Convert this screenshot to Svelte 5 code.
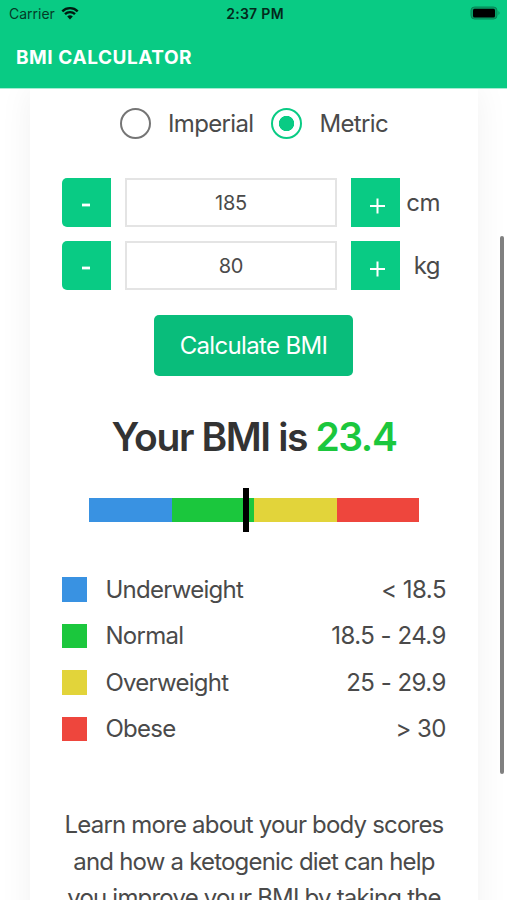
<script lang="ts">
	let units = $state('metric');
	let height = $state(185);
	let weight = $state(80);
	let bmi = $state(23.4);

	const ranges = [
		{ name: 'Underweight', key: 'under', range: '< 18.5' },
		{ name: 'Normal', key: 'normal', range: '18.5 - 24.9' },
		{ name: 'Overweight', key: 'over', range: '25 - 29.9' },
		{ name: 'Obese', key: 'obese', range: '> 30' }
	];

	let level = $derived(bmi < 18.5 ? 'under' : bmi < 25 ? 'normal' : bmi < 30 ? 'over' : 'obese');

	function calculate() {
		const ratio =
			units === 'metric' ? weight / (height / 100) ** 2 : (703 * weight) / height ** 2;
		bmi = Math.round(ratio * 10) / 10;
	}
</script>

<div class="screen">
	<header>
		<div class="status">
			<div class="carrier">
				<span>Carrier</span>
				<svg width="18" height="14" viewBox="0 0 18 14">
					<path d="M1.3 5.3a11 11 0 0 1 15.4 0" />
					<path d="M4 8.2a7.1 7.1 0 0 1 10 0" />
					<path class="dot" d="M9 13.4 6.2 10.6a4 4 0 0 1 5.6 0z" />
				</svg>
			</div>
			<span class="time">2:37 PM</span>
			<svg class="battery" width="31" height="14" viewBox="0 0 31 14">
				<rect class="shell" x="1" y="1" width="26" height="12" rx="3.5" />
				<rect x="3" y="2.8" width="22" height="8.6" rx="1.5" />
				<path class="tip" d="M28.5 5v4q2-2 0-4z" />
			</svg>
		</div>
		<h1>BMI CALCULATOR</h1>
	</header>

	<main>
		<section class="card">
			<div class="units">
				<label>
					<input type="radio" bind:group={units} value="imperial" />
					<span>Imperial</span>
				</label>
				<label>
					<input type="radio" bind:group={units} value="metric" />
					<span>Metric</span>
				</label>
			</div>

			<div class="fields">
				<div class="field">
					<button class="step minus" aria-label="Decrease height" onclick={() => height--}>
						<svg width="24" height="24" viewBox="0 0 24 24"><path d="M8 13h8" /></svg>
					</button>
					<input type="text" aria-label="Height" bind:value={height} />
					<button class="step plus" aria-label="Increase height" onclick={() => height++}>
						<svg width="24" height="24" viewBox="0 0 24 24"><path d="M5 14h15M12.5 6.5v15" /></svg>
					</button>
					<span class="unit">{units === 'metric' ? 'cm' : 'in'}</span>
				</div>
				<div class="field">
					<button class="step minus" aria-label="Decrease weight" onclick={() => weight--}>
						<svg width="24" height="24" viewBox="0 0 24 24"><path d="M8 13h8" /></svg>
					</button>
					<input type="text" aria-label="Weight" bind:value={weight} />
					<button class="step plus" aria-label="Increase weight" onclick={() => weight++}>
						<svg width="24" height="24" viewBox="0 0 24 24"><path d="M5 14h15M12.5 6.5v15" /></svg>
					</button>
					<span class="unit">{units === 'metric' ? 'kg' : 'lb'}</span>
				</div>
			</div>

			<button class="calculate" onclick={calculate}>Calculate BMI</button>

			<h2>Your BMI is <span class="score {level}">{bmi}</span></h2>

			<div class="scale">
				{#each ranges as r}
					<div class="segment {r.key}"></div>
				{/each}
				<div class="marker" style="left: {(bmi / 50) * 100}%"></div>
			</div>

			<ul>
				{#each ranges as r}
					<li>
						<span class="swatch {r.key}"></span>
						<span class="name">{r.name}</span>
						<span class="range">{r.range}</span>
					</li>
				{/each}
			</ul>

			<p>
				Learn more about your body scores<br />
				and how a ketogenic diet can help<br />
				you improve your BMI by taking the
			</p>
		</section>
		<div class="scrollbar"></div>
	</main>
</div>

<style>
	:global(body) {
		margin: 0;
		background: #fff;
	}

	.screen {
		position: relative;
		display: flex;
		flex-direction: column;
		width: 507px;
		height: 900px;
		overflow: hidden;
		font-family: Inter, 'Liberation Sans', sans-serif;
		color: #4a4a4a;
	}

	header {
		height: 88px;
		flex: none;
		background: #09cb84;
		border-bottom: 1px solid #a5ecd2;
		z-index: 1;
	}

	.status {
		display: grid;
		grid-template-columns: 1fr auto 1fr;
		align-items: center;
		height: 26px;
		padding: 0 6px 0 9px;
		font-size: 14px;
		color: #043b27;
	}

	.carrier {
		display: flex;
		align-items: center;
		gap: 6px;
	}

	.carrier svg {
		fill: none;
		stroke: #001a10;
		stroke-width: 2.4;
	}

	.carrier .dot {
		fill: #001a10;
		stroke: none;
	}

	.time {
		font-size: 14px;
		font-weight: 600;
		letter-spacing: 0.3px;
		color: #03291b;
	}

	.battery {
		justify-self: end;
	}

	.battery .shell {
		fill: #08a068;
		stroke: #078657;
	}

	.battery .tip {
		fill: #078657;
	}

	h1 {
		margin: 21px 0 0 16px;
		font-size: 19px;
		line-height: 22px;
		font-weight: 700;
		letter-spacing: 0.55px;
		color: #fff;
	}

	main {
		flex: 1;
		min-height: 0;
		padding: 0 29px 0 30px;
	}

	.card {
		display: flex;
		flex-direction: column;
		box-sizing: border-box;
		height: 900px;
		padding: 9px 32px 0;
		box-shadow: 0 0 32px rgba(0, 0, 0, 0.06);
	}

	.units {
		display: flex;
		justify-content: center;
		gap: 18px;
		height: 50px;
	}

	label {
		display: flex;
		align-items: center;
		gap: 17px;
		font-size: 24px;
		letter-spacing: -0.65px;
	}

	label input {
		appearance: none;
		box-sizing: border-box;
		width: 31px;
		height: 31px;
		margin: 0;
		border: 2.5px solid #757575;
		border-radius: 50%;
	}

	label input:checked {
		border-color: #09cb84;
		background: radial-gradient(circle, #09cb84 7.3px, #fff 8px);
	}

	.fields {
		display: flex;
		flex-direction: column;
		gap: 14px;
		margin-top: 30px;
	}

	.field {
		display: grid;
		grid-template-columns: 49px 212px 49px 1fr;
		gap: 14px;
		align-items: center;
		height: 49px;
	}

	.step {
		display: flex;
		align-items: center;
		justify-content: center;
		height: 49px;
		padding: 0;
		border: 0;
		background: #09cb84;
	}

	.step svg {
		margin-top: 2px;
		fill: none;
		stroke: #fff;
		stroke-width: 2;
	}

	.minus {
		border-radius: 5px 0 0 5px;
	}

	.minus svg {
		margin-right: 1px;
	}

	.minus path {
		stroke-width: 2.8;
	}

	.plus svg {
		margin-left: 2px;
	}

	.field input {
		box-sizing: border-box;
		width: 212px;
		height: 49px;
		padding: 0;
		border: 2px solid #e4e4e4;
		text-align: center;
		font: 20px Inter, 'Liberation Sans', sans-serif;
		letter-spacing: -0.3px;
		color: #4a4a4a;
	}

	.unit {
		padding-right: 6px;
		margin-left: -8px;
		text-align: right;
		font-size: 24px;
		letter-spacing: -0.5px;
	}

	.calculate {
		align-self: center;
		width: 199px;
		height: 61px;
		margin: 25px 1px 0 0;
		padding: 0;
		border: 0;
		border-radius: 5px;
		background: #09bd7b;
		color: #fff;
		font: 24px Inter, 'Liberation Sans', sans-serif;
		letter-spacing: -0.65px;
	}

	h2 {
		margin: 36px 0 0;
		text-align: center;
		font-size: 39px;
		line-height: 50px;
		font-weight: 600;
		letter-spacing: -1.4px;
		color: #333;
		white-space: nowrap;
	}

	.score.under {
		color: #3992e2;
	}

	.score.normal {
		color: #1bc73d;
	}

	.score.over {
		color: #e2d43a;
	}

	.score.obese {
		color: #ee463d;
	}

	.scale {
		position: relative;
		display: flex;
		align-self: center;
		width: 330px;
		height: 24px;
		margin-top: 36px;
	}

	.segment {
		flex: 1;
	}

	.segment.under,
	.swatch.under {
		background: #3992e2;
	}

	.segment.normal,
	.swatch.normal {
		background: #1bc73d;
	}

	.segment.over,
	.swatch.over {
		background: #e2d43a;
	}

	.segment.obese,
	.swatch.obese {
		background: #ee463d;
	}

	.marker {
		position: absolute;
		top: -10px;
		width: 6px;
		height: 44px;
		background: #000;
	}

	ul {
		margin: 44px 0 0;
		padding: 0;
		list-style: none;
	}

	li {
		display: flex;
		align-items: center;
		height: 46.5px;
		font-size: 24px;
		letter-spacing: -0.5px;
	}

	.swatch {
		width: 24.5px;
		height: 24.5px;
		margin-right: 19px;
	}

	.name {
		letter-spacing: -0.75px;
	}

	.range {
		margin-left: auto;
	}

	p {
		margin: 55px -20px 0;
		text-align: center;
		font-size: 24px;
		line-height: 36.5px;
		letter-spacing: -0.8px;
		white-space: nowrap;
	}

	.scrollbar {
		position: absolute;
		top: 236px;
		right: 3px;
		width: 4px;
		height: 538px;
		border-radius: 2px;
		background: #808080;
	}
</style>
